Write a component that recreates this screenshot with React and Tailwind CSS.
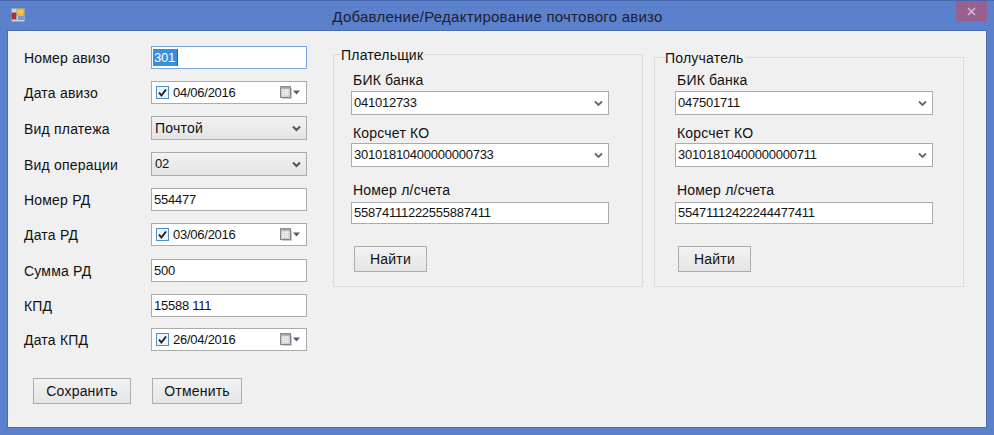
const font = "font-['Liberation_Sans',sans-serif] text-[14px] tracking-[0.2px] text-[#111]";
const digits = "text-[13px] tracking-[-0.25px]";

function Chevron({ bold }) {
  return (
    <svg width="9" height="7" viewBox="0 0 9 7" className="shrink-0">
      <path
        d="M1 1.5 L4.5 5 L8 1.5"
        fill="none"
        stroke={bold ? "#555" : "#666"}
        strokeWidth={bold ? 2 : 1.8}
      />
    </svg>
  );
}

function TextBox({ value, className = "w-[156px] h-[23px]", selected }) {
  return (
    <div
      className={`flex items-center bg-white border px-[2px] ${digits} ${
        selected ? "border-[#7aa5d6]" : "border-[#ababab]"
      } ${className}`}
    >
      {selected ? (
        <span className="bg-[#3a8fdb] text-white px-px -ml-px pr-[2px] leading-[17px] border-r border-[#555]">{value}</span>
      ) : (
        <span>{value}</span>
      )}
    </div>
  );
}

function ComboBox({ value }) {
  return (
    <div className={`w-[258px] h-[24px] flex items-center justify-between bg-white border border-[#ababab] pl-[2px] pr-[5px] ${digits}`}>
      <span>{value}</span>
      <Chevron />
    </div>
  );
}

function DropDown({ value, className = "" }) {
  return (
    <div className={`w-[156px] h-[24px] flex items-center justify-between border border-[#ababab] bg-gradient-to-b from-[#f2f2f2] to-[#e4e4e4] pl-[3px] pr-[5px] ${className}`}>
      <span>{value}</span>
      <Chevron bold />
    </div>
  );
}

function DatePicker({ value }) {
  return (
    <div className={`w-[156px] h-[23px] flex items-center bg-white border border-[#ababab] pl-[4px] pr-[4px] ${digits}`}>
      <svg width="13" height="13" viewBox="0 0 13 13" className="shrink-0">
        <rect x="0.5" y="0.5" width="12" height="12" fill="#eef4fb" stroke="#4a90d0" />
        <path d="M3 6.5 L5.4 9.5 L10 3.5" fill="none" stroke="#222" strokeWidth="2" />
      </svg>
      <span className="ml-[4px] flex-1">{value}</span>
      <svg width="22" height="13" viewBox="0 0 22 13" className="shrink-0">
        <rect x="0.5" y="0.5" width="10" height="11" fill="#cfcfcf" stroke="#858585" />
        <rect x="0.5" y="0.5" width="10" height="2" fill="#a0a0a0" />
        <path d="M2 4.5h7M2 6.5h7M2 8.5h7M3.5 3v7M5.5 3v7M7.5 3v7" stroke="#f2f2f2" strokeWidth="0.7" />
        <path d="M11.5 2v10.5H2" fill="none" stroke="#c8c8c8" />
        <path d="M13 4.5h7l-3.5 4z" fill="#4e5a78" />
      </svg>
    </div>
  );
}

function Row({ label, className = "", children }) {
  return (
    <div className={`flex items-center ${className}`}>
      <span className="w-[127px] pt-[2px]">{label}</span>
      {children}
    </div>
  );
}

function Btn({ children, className = "" }) {
  return (
    <button className={`h-[26px] border border-[#adadad] bg-gradient-to-b from-[#f2f2f2] to-[#e5e5e5] text-center ${className}`}>
      {children}
    </button>
  );
}

function Group({ title, className = "", bik, kor, acc }) {
  return (
    <fieldset className={`w-[310px] border border-[#dcdcdc] ${className}`}>
      <legend className="ml-[-10px] pr-[2px] leading-[15px] relative top-px">{title}</legend>
      <div className="pl-[2px] mb-[3px] leading-[15px]">БИК банка</div>
      <ComboBox value={bik} />
      <div className="pl-[2px] mt-[11px] mb-[2px] leading-[15px]">Корсчет КО</div>
      <ComboBox value={kor} />
      <div className="pl-[2px] mt-[16px] mb-[4px] leading-[15px]">Номер л/счета</div>
      <TextBox value={acc} className="w-[258px] h-[22px]" />
      <Btn className="w-[73px] ml-[3px] mt-[22px] block">Найти</Btn>
    </fieldset>
  );
}

export default function App() {
  return (
    <div className={`w-[994px] h-[435px] flex flex-col bg-[#5c81cc] border-t border-[#4768ae] ${font}`}>
      {/* Title bar */}
      <div className="h-[29px] shrink-0 flex items-start relative">
        <svg width="14" height="14" viewBox="0 0 14 14" className="ml-[11px] mt-[7px]">
          <rect x="0.5" y="0.5" width="13" height="13" fill="#c9ced8" />
          <rect x="6" y="1" width="7" height="6" fill="#f5c93a" stroke="#b58a1c" strokeWidth="0.6" />
          <rect x="1" y="5" width="4" height="6" fill="#c22d2d" stroke="#7c2020" strokeWidth="0.6" />
          <rect x="7" y="8" width="6" height="4" fill="#6f9bdc" />
        </svg>
        <div className="flex-1 text-center text-[#1a2030] text-[15px] tracking-[0.25px] mt-[5px] pr-[24px]">
          Добавление/Редактирование почтового авизо
        </div>
        <div className="absolute right-[7px] top-0 w-[31px] h-[20px] bg-[#96618f] flex items-center justify-center">
          <svg width="9" height="9" viewBox="0 0 9 9">
            <path d="M1 1l7 7M8 1L1 8" stroke="#d8bcd8" strokeWidth="1.5" />
          </svg>
        </div>
      </div>

      {/* Client area */}
      <div className="flex-1 mx-[7px] mb-[7px] bg-[#f0f0f0] border border-[#4c6cae] flex">
        <div className="w-[325px] shrink-0 pl-[16px] pt-[15px] flex flex-col">
          <Row label="Номер авизо"><TextBox value="301" selected /></Row>
          <Row label="Дата авизо" className="mt-[12px]"><DatePicker value="04/06/2016" /></Row>
          <Row label="Вид платежа" className="mt-[12px]"><DropDown value="Почтой" /></Row>
          <Row label="Вид операции" className="mt-[12px]"><DropDown value="02" className={digits} /></Row>
          <Row label="Номер РД" className="mt-[12px]"><TextBox value="554477" /></Row>
          <Row label="Дата РД" className="mt-[12px]"><DatePicker value="03/06/2016" /></Row>
          <Row label="Сумма РД" className="mt-[13px]"><TextBox value="500" /></Row>
          <Row label="КПД" className="mt-[12px]"><TextBox value="15588 111" /></Row>
          <Row label="Дата КПД" className="mt-[11px]"><DatePicker value="26/04/2016" /></Row>
          <div className="flex mt-[27px] pl-[9px] gap-[21px]">
            <Btn className="w-[98px]">Сохранить</Btn>
            <Btn className="w-[90px]">Отменить</Btn>
          </div>
        </div>
        <div className="flex items-start gap-[11px] pt-[16px]">
          <Group title="Плательщик" bik="041012733" kor="30101810400000000733" acc="55874111222555887411" className="h-[240px] pl-[17px] pt-[11px]" />
          <Group title="Получатель" bik="047501711" kor="30101810400000000711" acc="55471112422244477411" className="mt-[3px] h-[237px] pl-[20px] pt-[8px]" />
        </div>
      </div>
    </div>
  );
}
